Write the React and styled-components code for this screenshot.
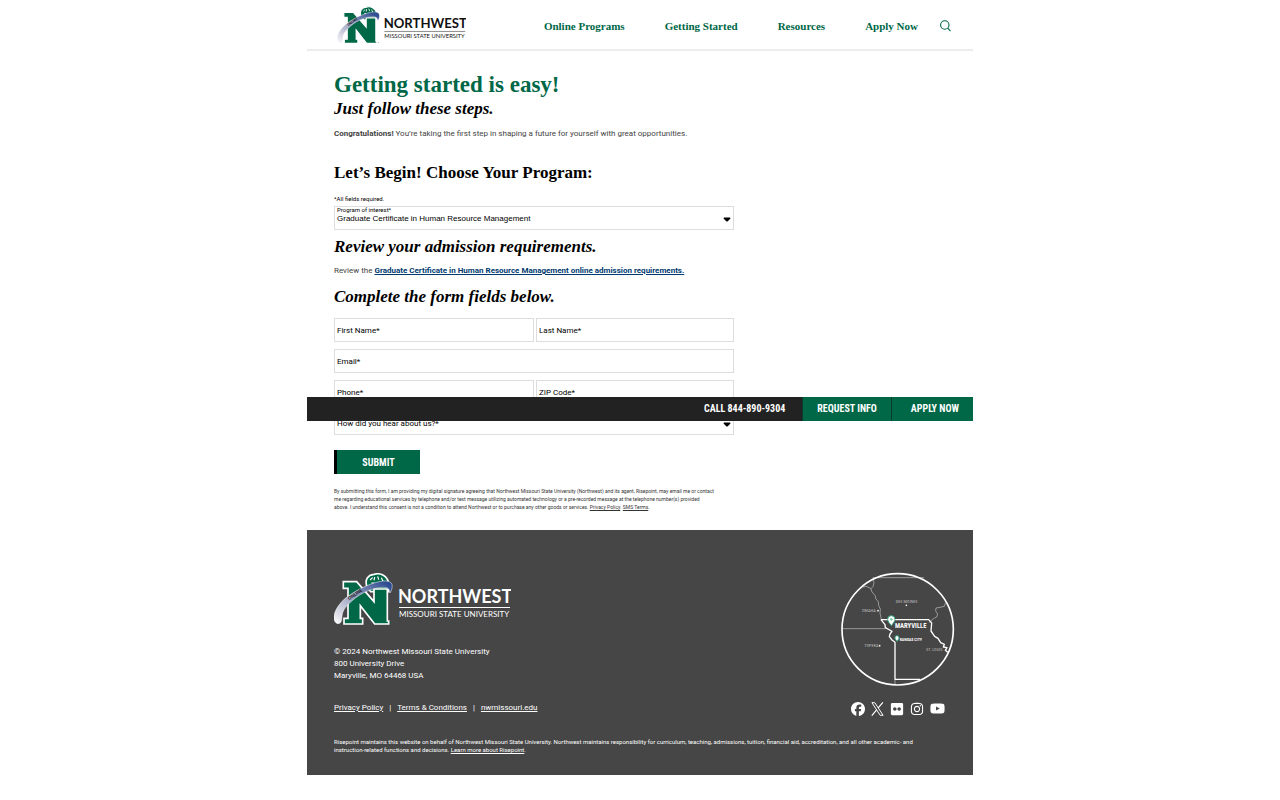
import React from "react";
import styled, { createGlobalStyle } from "styled-components";
import { FaFacebook, FaFlickr, FaInstagram, FaYoutube } from "react-icons/fa6";

const serif = '"Liberation Serif", serif';
const sans = 'Roboto, "Liberation Sans", sans-serif';
const narrow = '"Roboto Condensed", "Liberation Sans Narrow", Roboto, sans-serif';
const green = "#006747";

const GlobalStyle = createGlobalStyle`
  * { box-sizing: border-box; }
  body { margin: 0; background: #fff; color: #000; font: 8px/12px ${sans}; }
  h1, h2, h3, p { margin: 0; padding: 0; }
  a { color: inherit; }
  svg { display: block; }
`;

const Page = styled.div`
  width: 100%;
  max-width: 666px;
  margin: 0 auto;
  position: relative;
`;

const Header = styled.header`
  display: flex;
  align-items: center;
  justify-content: space-between;
  height: 51px;
  padding: 2px 22px 0 30px;
  border-bottom: 2px solid #ececec;
`;

const Nav = styled.nav`
  display: flex;
  align-items: center;
  gap: 40px;
`;

const NavLink = styled.a`
  font: bold 11px/16px ${serif};
  color: ${green};
  text-decoration: none;
  white-space: nowrap;
`;

const NavEnd = styled.div`
  display: flex;
  align-items: center;
  gap: 22px;
`;

const SearchButton = styled.button`
  display: flex;
  padding: 0;
  border: 0;
  background: none;
  color: ${green};
`;

const Main = styled.main`
  padding: 20px 27px 19px;
`;

const Column = styled.div`
  max-width: 400px;
`;

const Title = styled.h1`
  font: bold 23px/28px ${serif};
  color: ${green};
`;

const Heading = styled.h2`
  font: bold 17px/20px ${serif};
`;

const SubHeading = styled.h3`
  font: italic bold 17px/20px ${serif};
`;

const Text = styled.p`
  color: #444;
  padding: ${(p) => p.$pad};
`;

const StrongLink = styled.a`
  font-weight: bold;
  color: #003a70;
`;

const Note = styled.p`
  font-size: 6px;
  line-height: 8px;
  padding: 12px 0 3px;
`;

const ProgramBox = styled.div`
  position: relative;
  display: flex;
  margin-bottom: 7px;
`;

const FloatLabel = styled.label`
  position: absolute;
  top: 0;
  left: 3px;
  font-size: 6px;
  line-height: 8px;
`;

const Select = styled.select`
  grid-area: 1 / 1;
  appearance: none;
  width: 100%;
  height: 24px;
  padding: 1px 2px 0;
  border: 1px solid #ddd;
  border-radius: 0;
  background: #fff;
  color: #000;
  font: 8px "Liberation Sans", sans-serif;
`;

const Caret = styled.svg`
  position: absolute;
  right: 3px;
  top: 11px;
  pointer-events: none;
`;

const Fields = styled.div`
  display: grid;
  grid-template-columns: 200px 1fr;
  gap: 7px 2px;
  padding-top: 11px;
`;

const FieldBox = styled.div`
  position: relative;
  display: grid;
  align-items: center;
  grid-column: ${(p) => (p.$wide ? "1 / -1" : "auto")};
`;

const FieldLabel = styled.label`
  grid-area: 1 / 1;
  z-index: 1;
  padding: 2px 0 0 3px;
  justify-self: start;
  pointer-events: none;
`;

const Input = styled.input`
  grid-area: 1 / 1;
  width: 100%;
  height: 24px;
  padding: 0 3px;
  border: 1px solid #ddd;
  font: 8px ${sans};
`;

const Submit = styled.button`
  display: block;
  width: 86px;
  height: 24px;
  margin-top: 15px;
  padding: 0;
  border: 0;
  border-left: 3px solid #000;
  background: ${green};
  color: #fff;
  font: bold 10px ${narrow};
`;

const Legal = styled.p`
  padding-top: 13px;
  font-size: 5px;
  line-height: 8px;
  color: #333;
`;

const ActionBar = styled.div`
  position: absolute;
  top: 397px;
  left: 0;
  right: 0;
  z-index: 2;
  display: flex;
  justify-content: flex-end;
  height: 24px;
  background: #222;
  font: bold 10px/24px ${narrow};
`;

const Action = styled.a`
  padding: ${(p) => p.$pad};
  border-left: ${(p) => (p.$fill ? "1px solid #0b3b2b" : "0")};
  background: ${(p) => (p.$fill ? green : "transparent")};
  color: #fff;
  text-decoration: none;
  white-space: nowrap;
`;

const Footer = styled.footer`
  padding: 42px 18px 21px 27px;
  background: #464646;
  color: #fff;
`;

const FooterTop = styled.div`
  display: flex;
  justify-content: space-between;
`;

const Address = styled.p`
  padding: 20px 0 20px;
`;

const FooterLinks = styled.div`
  display: flex;
  gap: 6px;
`;

const FooterBrand = styled.div`
  padding-top: 1px;
`;

const FooterSide = styled.div`
  display: flex;
  flex-direction: column;
  align-items: center;
  gap: 14px;
`;

const Social = styled.div`
  display: flex;
  align-items: center;
  gap: 6px;
`;

const Disclaimer = styled.p`
  padding-top: 22px;
  font-size: 6px;
  line-height: 8px;
`;

function Logo({ width, height, ink, rule, id }) {
  return (
    <svg width={width} height={height} viewBox="0 0 177 53" role="img" aria-label="Northwest Missouri State University">
      <defs>
        <linearGradient id={id} x1="0" y1="1" x2="1" y2="0">
          <stop offset="0" stopColor="#fff" />
          <stop offset="0.2" stopColor="#d3d5e2" />
          <stop offset="0.55" stopColor="#8d94b8" />
          <stop offset="1" stopColor="#1d3f8c" />
        </linearGradient>
      </defs>
      <g transform="scale(.3333) translate(-40 -38)">
        <path d="M140 82 C130 58 142 44 160 42 C180 36 200 48 203 66 L204 94 H150 Z" fill={green} stroke="#fff" strokeWidth="5" />
        <path d="M68 64 H108 L160 124 V86 H200 V182 H204 V191 H162 L119 136 V174 H126 V191 H70 V174 H82 V84 H68 Z" fill={green} stroke="#fff" strokeWidth="5" />
        <path d="M148 59 l8-7 M162 50 l-2 10 M171 48 l3 10 M182 52 l5 10 M152 68 h9 M169 67 h9 M188 72 h8" stroke="#fff" strokeWidth="3.5" fill="none" />
        <path d="M52 190 C28 184 40 138 82 108 C125 75 205 46 214 72 C216 82 213 90 208 98 C207 84 198 80 184 81 C138 84 92 116 70 148 C58 168 70 188 52 190 Z" fill={`url(#${id})`} stroke="#fff" strokeWidth="1.5" />
        <text x="86" y="120" transform="rotate(-35 86 120)" fontFamily="Lato, sans-serif" fontWeight="900" fontSize="13" fill="#111">ONLINE</text>
        <circle cx="210" cy="188" r="2" fill={green} />
      </g>
      <text x="64" y="30" fontFamily="Lato, sans-serif" fontWeight="700" fontSize="18" fill={ink}>NORTHWEST</text>
      <rect x="65" y="34" width="111" height="1" fill={rule} />
      <text x="65" y="44" fontFamily="Lato, sans-serif" fontSize="8" fill={ink}>MISSOURI STATE UNIVERSITY</text>
    </svg>
  );
}

function RegionMap() {
  return (
    <svg width="115" height="115" viewBox="30 35 345 345" role="img" aria-label="Map of the Maryville region">
      <g fill="none" stroke="#aaa" strokeWidth="2.5" strokeLinejoin="round">
        <path d="M128 52 H282 M37 205 H167 M195 357 V375" />
        <path d="M128 55 l4 12 -3 12 -7 7 M98 81 l10-3 14 6 4 11 9 10 3 11 7 8 1 12 5 10 -1 12 3 14 1 9" />
        <path d="M347 126 l-4 12 -13 3 -12 2 -1 9 6 9 -3 9 -10 5 -8 7 -4 5" />
      </g>
      <path d="M153 178 H296 L305 188 L303 212 L314 228 L324 234 L332 247 L343 252 L340 260 L351 262 L346 270 L353 276 M153 178 L165 193 L166 202 L179 209 L186 213 L180 221 L178 229 L186 239 L195 246 V357 H270" fill="none" stroke="#fff" strokeWidth="4" strokeLinejoin="round" />
      <circle cx="203" cy="207" r="167" fill="none" stroke="#fff" strokeWidth="5" />
      <path d="M184 196 C178 188 173 183 173 177 a11 11 0 0 1 22 0 C195 183 190 188 184 196 Z" fill="#fff" stroke="#3aa680" strokeWidth="3" />
      <circle cx="184" cy="177" r="4" fill="#8cc9b3" />
      <path d="M201 243 C197 238 195 235 195 232 a6 6 0 0 1 12 0 C207 235 205 238 201 243 Z" fill="#fff" stroke="#3aa680" strokeWidth="3" />
      <g fill="#bbb" fontFamily={narrow} fontWeight="400" fontSize="13">
        <text x="197" y="129">DES MOINES</text>
        <text x="96" y="155">OMAHA</text>
        <text x="103" y="259">TOPEKA</text>
        <text x="288" y="272">ST. LOUIS</text>
      </g>
      <g fill="#fff" fontFamily={narrow} fontWeight="700">
        <text x="195" y="203" fontSize="20">MARYVILLE</text>
        <text x="209" y="241" fontSize="12">KANSAS CITY</text>
        <circle cx="229" cy="135" r="2.5" />
        <circle cx="144" cy="151" r="2.5" />
        <circle cx="149" cy="256" r="2.5" />
      </g>
    </svg>
  );
}

const XLogo = () => (
  <svg width="13" height="14" viewBox="0 0 13 14" fill="none" stroke="currentColor">
    <path d="M0.9 0.7 H3.8 L12.1 13.3 H9.2 Z" strokeWidth="1" />
    <path d="M11.9 0.4 L7.2 5.9 M5.6 7.8 L0.8 13.6" strokeWidth="1.2" />
  </svg>
);

const Arrow = () => (
  <Caret width="8" height="5" viewBox="0 0 8 5" aria-hidden="true">
    <path d="M1 0.5 H7 L7.5 1.5 L4.5 4.5 H3.5 L0.5 1.5 Z" fill="#000" />
  </Caret>
);

function Field({ id, label, wide, type = "text" }) {
  return (
    <FieldBox $wide={wide}>
      <FieldLabel htmlFor={id}>{label}</FieldLabel>
      <Input id={id} type={type} />
    </FieldBox>
  );
}

export default function App() {
  return (
    <Page>
      <GlobalStyle />
      <Header>
        <Logo width="129" height="39" ink="#111" rule="#666" id="swoosh-top" />
        <NavEnd>
          <Nav>
            <NavLink href="#programs">Online Programs</NavLink>
            <NavLink href="#start">Getting Started</NavLink>
            <NavLink href="#resources">Resources</NavLink>
            <NavLink href="#apply">Apply Now</NavLink>
          </Nav>
          <SearchButton aria-label="Search">
            <svg width="11" height="12" viewBox="0 0 11 12" fill="none" stroke="currentColor" strokeWidth="1.1">
              <circle cx="4.8" cy="5" r="4.2" />
              <path d="M7.8 8.2 L10.5 11.2" />
            </svg>
          </SearchButton>
        </NavEnd>
      </Header>

      <Main>
        <Column>
          <Title>Getting started is easy!</Title>
          <SubHeading>Just follow these steps.</SubHeading>
          <Text $pad="9px 0 23px">
            <b>Congratulations!</b> You’re taking the first step in shaping a future for yourself with great opportunities.
          </Text>
          <Heading>Let’s Begin! Choose Your Program:</Heading>
          <Note>*All fields required.</Note>
          <ProgramBox>
            <Select id="program" defaultValue="hr">
              <option value="hr">Graduate Certificate in Human Resource Management</option>
            </Select>
            <FloatLabel htmlFor="program">Program of interest*</FloatLabel>
            <Arrow />
          </ProgramBox>
          <SubHeading>Review your admission requirements.</SubHeading>
          <Text $pad="8px 0 10px">
            Review the <StrongLink href="#requirements">Graduate Certificate in Human Resource Management online admission requirements.</StrongLink>
          </Text>
          <SubHeading>Complete the form fields below.</SubHeading>
          <Fields>
            <Field id="first" label="First Name*" />
            <Field id="last" label="Last Name*" />
            <Field id="email" label="Email*" type="email" wide />
            <Field id="phone" label="Phone*" type="tel" />
            <Field id="zip" label="ZIP Code*" />
            <FieldBox $wide>
              <FieldLabel htmlFor="source">How did you hear about us?*</FieldLabel>
              <Select id="source" defaultValue="">
                <option value="" />
              </Select>
              <Arrow />
            </FieldBox>
          </Fields>
          <Submit type="button">SUBMIT</Submit>
          <Legal>
            By submitting this form, I am providing my digital signature agreeing that Northwest Missouri State University (Northwest) and its agent, Risepoint, may email me or contact<br />
            me regarding educational services by telephone and/or text message utilizing automated technology or a pre-recorded message at the telephone number(s) provided<br />
            above. I understand this consent is not a condition to attend Northwest or to purchase any other goods or services. <a href="#privacy">Privacy Policy</a>. <a href="#sms">SMS Terms</a>.
          </Legal>
        </Column>
      </Main>

      <ActionBar>
        <Action href="tel:8448909304" $pad="0 17px">CALL 844-890-9304</Action>
        <Action href="#info" $fill $pad="0 14px">REQUEST INFO</Action>
        <Action href="#apply" $fill $pad="0 14px 0 19px">APPLY NOW</Action>
      </ActionBar>

      <Footer>
        <FooterTop>
          <FooterBrand>
            <Logo width="177" height="53" ink="#fff" rule="#fff" id="swoosh-foot" />
            <Address>
              © 2024 Northwest Missouri State University<br />
              800 University Drive<br />
              Maryville, MO 64468 USA
            </Address>
            <FooterLinks>
              <a href="#privacy">Privacy Policy</a>
              <span>|</span>
              <a href="#terms">Terms &amp; Conditions</a>
              <span>|</span>
              <a href="#site">nwmissouri.edu</a>
            </FooterLinks>
          </FooterBrand>
          <FooterSide>
            <RegionMap />
            <Social>
              <a href="#facebook" aria-label="Facebook"><FaFacebook size={14} /></a>
              <a href="#x" aria-label="X"><XLogo /></a>
              <a href="#flickr" aria-label="Flickr"><FaFlickr size={14} /></a>
              <a href="#instagram" aria-label="Instagram"><FaInstagram size={14} /></a>
              <a href="#youtube" aria-label="YouTube"><FaYoutube size={15} /></a>
            </Social>
          </FooterSide>
        </FooterTop>
        <Disclaimer>
          Risepoint maintains this website on behalf of Northwest Missouri State University. Northwest maintains responsibility for curriculum, teaching, admissions, tuition, financial aid, accreditation, and all other academic- and<br />
          instruction-related functions and decisions. <a href="#risepoint">Learn more about Risepoint</a>.
        </Disclaimer>
      </Footer>
    </Page>
  );
}
